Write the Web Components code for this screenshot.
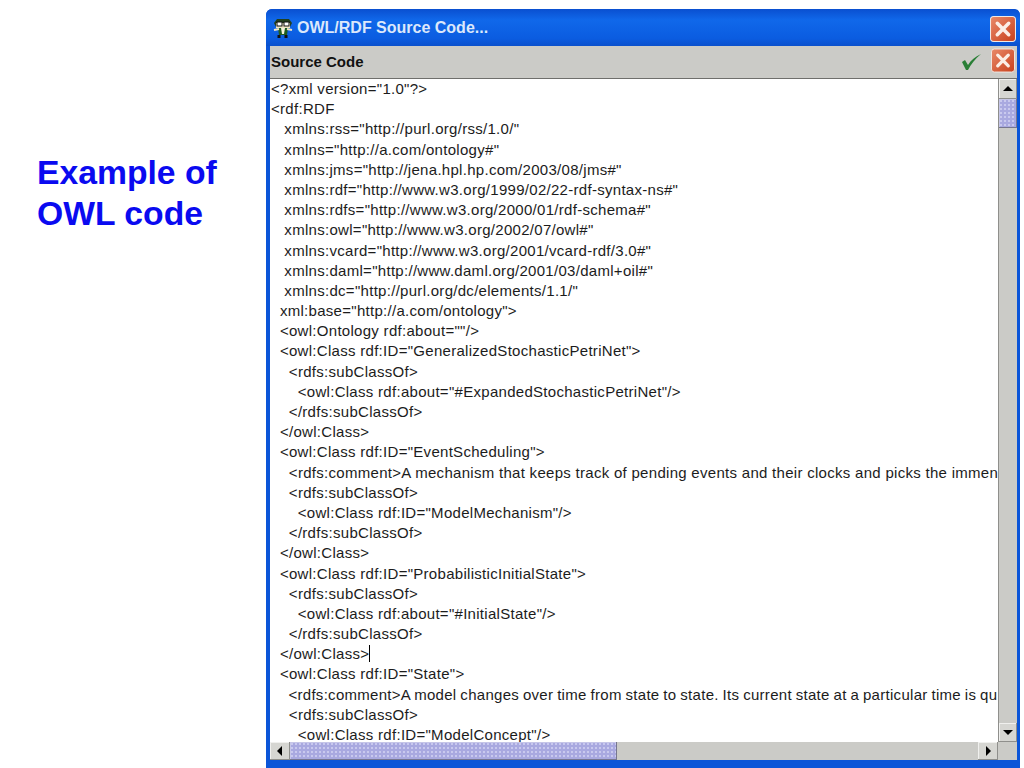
<!DOCTYPE html>
<html>
<head>
<meta charset="utf-8">
<title>Example of OWL code</title>
<style>
  html, body { margin: 0; padding: 0; background: #fff; }
  body { width: 1024px; height: 768px; overflow: hidden; font-family: "Liberation Sans", Arial, sans-serif; }
</style>
</head>
<body>
<owl-slide>
  <span slot="heading">Example of<br>OWL code</span>
  <source-window title-text="OWL/RDF Source Code..." bar-text="Source Code"></source-window>
</owl-slide>

<script>
const CODE_LINES = [
  '<?xml version="1.0"?>',
  '<rdf:RDF',
  '   xmlns:rss="http://purl.org/rss/1.0/"',
  '   xmlns="http://a.com/ontology#"',
  '   xmlns:jms="http://jena.hpl.hp.com/2003/08/jms#"',
  '   xmlns:rdf="http://www.w3.org/1999/02/22-rdf-syntax-ns#"',
  '   xmlns:rdfs="http://www.w3.org/2000/01/rdf-schema#"',
  '   xmlns:owl="http://www.w3.org/2002/07/owl#"',
  '   xmlns:vcard="http://www.w3.org/2001/vcard-rdf/3.0#"',
  '   xmlns:daml="http://www.daml.org/2001/03/daml+oil#"',
  '   xmlns:dc="http://purl.org/dc/elements/1.1/"',
  '  xml:base="http://a.com/ontology">',
  '  <owl:Ontology rdf:about=""/>',
  '  <owl:Class rdf:ID="GeneralizedStochasticPetriNet">',
  '    <rdfs:subClassOf>',
  '      <owl:Class rdf:about="#ExpandedStochasticPetriNet"/>',
  '    </rdfs:subClassOf>',
  '  </owl:Class>',
  '  <owl:Class rdf:ID="EventScheduling">',
  '    <rdfs:comment>A mechanism that keeps track of pending events and their clocks and picks the immen',
  '    <rdfs:subClassOf>',
  '      <owl:Class rdf:ID="ModelMechanism"/>',
  '    </rdfs:subClassOf>',
  '  </owl:Class>',
  '  <owl:Class rdf:ID="ProbabilisticInitialState">',
  '    <rdfs:subClassOf>',
  '      <owl:Class rdf:about="#InitialState"/>',
  '    </rdfs:subClassOf>',
  '  </owl:Class>',
  '  <owl:Class rdf:ID="State">',
  '    <rdfs:comment>A model changes over time from state to state. Its current state at a particular time is qu',
  '    <rdfs:subClassOf>',
  '      <owl:Class rdf:ID="ModelConcept"/>'
];

class OwlSlide extends HTMLElement {
  constructor() {
    super();
    this.attachShadow({mode:'open'}).innerHTML = `
      <style>
        :host { display: flex; width: 1024px; height: 768px; box-sizing: border-box; padding: 9px 4px 0 37px; }
        .heading { width: 229px; flex: none; padding-top: 143px; font: bold 33.7px/41px "Liberation Sans", Arial, sans-serif; color: #0a0af0; }
      </style>
      <div class="heading"><slot name="heading"></slot></div>
      <slot></slot>`;
  }
}

class CloseButton extends HTMLElement {
  constructor() {
    super();
    this.attachShadow({mode:'open'}).innerHTML = `
      <style>
        :host { display: block; width: 25px; height: 25px; flex: none; }
        svg { display: block; width: 100%; height: 100%; }
      </style>
      <svg viewBox="0 0 25 25">
        <defs>
          <linearGradient id="g" x1="0" y1="0" x2="1" y2="1">
            <stop offset="0" stop-color="#e98a6a"/><stop offset="1" stop-color="#c8401c"/>
          </linearGradient>
        </defs>
        <rect x="0.5" y="0.5" width="24" height="24" rx="3" fill="url(#g)" stroke="#f2e9e4"/>
        <path d="M7 7 L18 18 M18 7 L7 18" stroke="#fbeee6" stroke-width="3.4" stroke-linecap="round"/>
      </svg>`;
  }
}

class ScrollBar extends HTMLElement {
  constructor() {
    super();
    const horizontal = this.getAttribute('orient') === 'h';
    const thumbStyle = this.getAttribute('thumb');
    this.attachShadow({mode:'open'}).innerHTML = `
      <style>
        :host { display: flex; flex-direction: ${horizontal ? 'row' : 'column'}; background: #cbcbc7; flex: none; }
        .btn { flex: none; width: ${horizontal ? '20px' : '18px'}; height: ${horizontal ? '18px' : '19.5px'}; background: #d6d6d2; box-shadow: inset -1px -1px 0 #8f8f8c, inset 1px 1px 0 #f0f0ee; display: flex; align-items: center; justify-content: center; }
        .track { flex: 1; min-width: 0; min-height: 0; }
        .thumb { ${thumbStyle}; background-color: #a9a9e0; background-image: radial-gradient(#c9c9ee 35%, transparent 40%); background-size: 4px 4px; box-shadow: inset -1px -1px 0 #77778f, inset 1px 1px 0 #c6c6e8; }
      </style>
      <div class="btn"><svg width="12" height="12" viewBox="0 0 12 12"><path d="${horizontal ? 'M8 1 V11 L3 6 Z' : 'M1 8 H11 L6 3 Z'}" fill="#000"/></svg></div>
      <div class="track"><div class="thumb"></div></div>
      <div class="btn"><svg width="12" height="12" viewBox="0 0 12 12"><path d="${horizontal ? 'M4 1 V11 L9 6 Z' : 'M1 4 H11 L6 9 Z'}" fill="#000"/></svg></div>`;
  }
}

class CodeView extends HTMLElement {
  constructor() {
    super();
    this.attachShadow({mode:'open'});
  }
  set lines(lines) {
    this._lines = lines;
    this.render();
  }
  render() {
    this.shadowRoot.innerHTML = `
      <style>
        :host { display: block; flex: 1; min-width: 0; height: 100%; overflow: hidden; background: #fff; box-sizing: border-box; padding: 0 0 0 1px; }
        .line { height: 20.2px; white-space: pre; font: 15px/20.2px "Liberation Sans", Arial, sans-serif; letter-spacing: 0.29px; color: #1c1c1c; }
        .tight { word-spacing: -0.6px; padding-left: 2px; }
        .caret { display: inline-block; width: 1px; height: 17px; background: #000; vertical-align: -3px; }
      </style>`;
    this._lines.forEach((line, i) => {
      const div = document.createElement('div');
      div.className = i === 30 ? 'line tight' : 'line';
      div.textContent = line;
      if (i === 28) {
        const caret = document.createElement('span');
        caret.className = 'caret';
        div.appendChild(caret);
      }
      this.shadowRoot.appendChild(div);
    });
  }
}

class SourceWindow extends HTMLElement {
  constructor() {
    super();
    const title = this.getAttribute('title-text');
    const bar = this.getAttribute('bar-text');
    this.attachShadow({mode:'open'}).innerHTML = `
      <style>
        :host { display: flex; flex-direction: column; width: 754px; height: 759px; flex: none; box-sizing: border-box; background: #0b55d8; border-radius: 6px 6px 0 0; padding: 0 3px 8px 4px; }
        .title { height: 37px; flex: none; display: flex; align-items: center; gap: 3px; margin: 0 -3px 0 -4px; padding: 0 4px 0 6px; background: linear-gradient(#0a4fd0 0, #1068ea 30%, #0b5ce0 80%, #0a50cc 100%); border-radius: 6px 6px 0 0; }
        .title span { flex: 1; font: bold 16px "Liberation Sans", Arial, sans-serif; letter-spacing: 0; color: #dce8fb; }
        .title close-button { width: 26px; height: 26px; margin-top: 3px; }
        .bar { height: 33px; flex: none; display: flex; align-items: flex-start; gap: 9px; background: #cbcbc7; border-bottom: 1px solid #6f6f6c; box-sizing: border-box; padding: 2px 2px 0 1px; }
        .bar b { flex: 1; font: bold 15px/28px "Liberation Sans", Arial, sans-serif; color: #111; }
        .bar svg { margin-top: 4px; }
        .bar close-button { width: 24px; }
        .middle { flex: 1; min-height: 0; display: flex; }
        .bottom { flex: none; display: flex; }
        .corner { width: 19px; background: #cbcbc7; flex: none; }
        scroll-bar[orient=h] { flex: 1; }
        scroll-bar[orient=v] { width: 18px; border-left: 1px solid #8f8f8c; }
        .hwrap { flex: 1; display: flex; height: 18px; }
      </style>
      <div class="title">
        <svg width="22" height="21" viewBox="0 0 22 21">
          <path d="M2 6 L5 2 L17 2 L20 6 L18 10 L4 10 Z" fill="#23401c"/>
          <rect x="4" y="6" width="14" height="5" fill="#efe6c4"/>
          <rect x="5" y="5" width="5" height="4" fill="#fff" stroke="#111"/>
          <rect x="12" y="5" width="5" height="4" fill="#fff" stroke="#111"/>
          <path d="M6 11 L16 11 L15 18 L7 18 Z" fill="#1f5c20"/>
          <path d="M9 11 L13 11 L12 17 L10 17 Z" fill="#f6f2dc"/>
          <path d="M2 13 L7 12 M20 13 L15 12" stroke="#efe6c4" stroke-width="2"/>
          <path d="M7 18 L7 21 M14 18 L14 21" stroke="#111" stroke-width="3"/>
        </svg>
        <span>${title}</span>
        <close-button></close-button>
      </div>
      <div class="bar">
        <b>${bar}</b>
        <svg width="22" height="20" viewBox="0 0 22 20"><path d="M2 10 L5 8 L8 13 C11 8 15 5 21 2 C15 7 11 12 8 18 L6 18 Z" fill="#2a7f36"/></svg>
        <close-button></close-button>
      </div>
      <div class="middle">
        <code-view></code-view>
        <scroll-bar orient="v" thumb="height:29px;width:18px"></scroll-bar>
      </div>
      <div class="bottom">
        <div class="hwrap"><scroll-bar orient="h" thumb="width:327px;height:18px"></scroll-bar></div>
        <div class="corner"></div>
      </div>`;
    this.shadowRoot.querySelector('code-view').lines = CODE_LINES;
  }
}

customElements.define('close-button', CloseButton);
customElements.define('scroll-bar', ScrollBar);
customElements.define('code-view', CodeView);
customElements.define('source-window', SourceWindow);
customElements.define('owl-slide', OwlSlide);
</script>
</body>
</html>
